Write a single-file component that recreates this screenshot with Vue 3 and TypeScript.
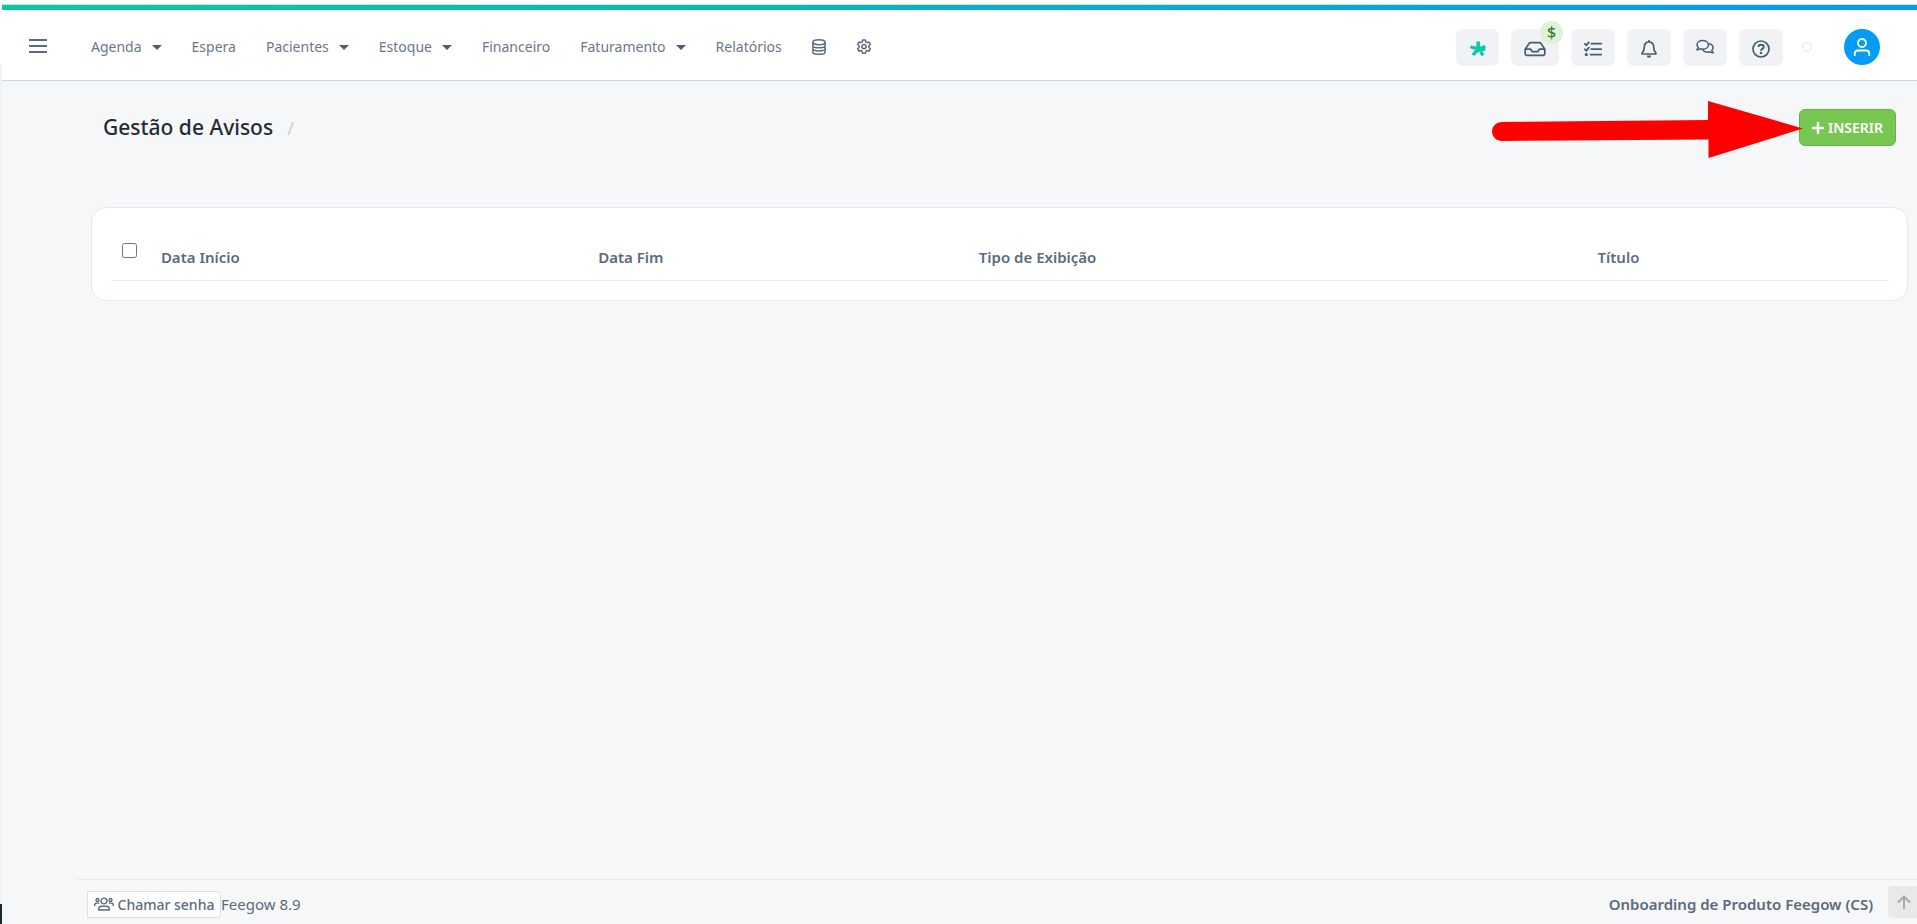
<script setup lang="ts">
import { ref } from 'vue'

interface NavItem {
  label: string
  menu: boolean
}

const navItems: NavItem[] = [
  { label: 'Agenda', menu: true },
  { label: 'Espera', menu: false },
  { label: 'Pacientes', menu: true },
  { label: 'Estoque', menu: true },
  { label: 'Financeiro', menu: false },
  { label: 'Faturamento', menu: true },
  { label: 'Relatórios', menu: false },
]

const allSelected = ref(false)
</script>

<template>
  <div class="shell">
    <div class="edge" aria-hidden="true"></div>
    <div class="page">
      <header class="topbar">
        <button class="menu-button" type="button" aria-label="Abrir menu">
          <svg width="18" height="18" viewBox="0 0 18 18" fill="none" stroke="currentColor" stroke-width="2">
            <path d="M0 2h18M0 8h18M0 14h18" />
          </svg>
        </button>
        <nav class="nav">
          <a v-for="item in navItems" :key="item.label" href="#" class="nav-link">
            {{ item.label }}
            <span v-if="item.menu" class="caret"></span>
          </a>
          <a href="#" class="nav-link" aria-label="Cadastros">
            <svg width="14" height="16" viewBox="0 0 14 16" fill="none" stroke="currentColor" stroke-width="1.5">
              <ellipse cx="7" cy="3.3" rx="6.1" ry="2.5" />
              <path d="M.9 3.3v9.6c0 1.3 2.7 2.4 6.1 2.4s6.1-1.1 6.1-2.4V3.3M.9 6.4c0 1.3 2.7 2.4 6.1 2.4s6.1-1.1 6.1-2.4M.9 9.6c0 1.3 2.7 2.4 6.1 2.4s6.1-1.1 6.1-2.4" />
            </svg>
          </a>
          <a href="#" class="nav-link" aria-label="Configurações">
            <svg width="16" height="16" viewBox="0 0 16 16" fill="none" stroke="currentColor" stroke-width="1.5" stroke-linejoin="round">
              <path d="M6.6 1h2.8l.4 1.900 1.300.8 1.900-.7 1.400 2.500-1.500 1.300v1.600l1.500 1.300-1.400 2.500-1.900-.7-1.300.8-.4 1.900H6.600l-.4-1.900-1.300-.8-1.900.7-1.400-2.500 1.500-1.300V6.800L1.600 5.500 3 3l1.900.7 1.300-.8z" />
              <circle cx="8" cy="7.6" r="2.2" />
            </svg>
          </a>
        </nav>
        <div class="tools">
          <button class="tool star" type="button" aria-label="Novidades">
            <svg width="16" height="16" viewBox="0 0 16 16" fill="none" stroke="currentColor">
              <path d="M8.200.5v6" stroke-width="3.600" />
              <path d="M.5 5.600c2.300 1.200 4.500 1.600 7.500 1.500 2.800 0 5-.5 7.200-1.700" stroke-width="3.200" />
              <path d="M3.200 14.100C4.600 10.500 8.800 8.200 15.300 8" stroke-width="3.600" />
              <path d="m10.800 10.600 2 3.900" stroke-width="3.200" />
            </svg>
          </button>
          <button class="tool wide" type="button" aria-label="Caixa">
            <svg width="22" height="16" viewBox="0 0 22 16" fill="none" stroke="currentColor" stroke-width="1.7" stroke-linejoin="round">
              <path d="M1.2 8.2 5 2.6C5.4 1.9 6 1.6 6.8 1.6h8.4c.8 0 1.4.3 1.8 1l3.8 5.6v4.6c0 .9-.6 1.5-1.5 1.5H2.7c-.9 0-1.5-.6-1.5-1.5zM1.5 8.2h5.2l1.5 2.5h5.6l1.5-2.5h5.2" />
            </svg>
            <span class="badge">$</span>
          </button>
          <button class="tool" type="button" aria-label="Tarefas">
            <svg width="18" height="16" viewBox="0 0 18 16" fill="none" stroke="currentColor" stroke-width="1.8" stroke-linecap="round">
              <path d="M7.4 2.7h9.8M7.4 8.2h9.8M6.6 13.6h10.6M.9 2.9l1.4 1.3L4.9 1.3M.9 8.3l1.4 1.3 2.6-2.9" />
              <circle cx="2.3" cy="13.6" r="1.6" fill="currentColor" stroke="none" />
            </svg>
          </button>
          <button class="tool" type="button" aria-label="Notificações">
            <svg width="16" height="18" viewBox="0 0 16 18" fill="none" stroke="currentColor" stroke-width="1.7" stroke-linejoin="round">
              <path d="M8 0v2M8 2c-3 0-4.700 2.200-4.700 5 0 3.700-1 4.900-2.100 5.900-.4.500-.2 1.100.4 1.100h12.800c.6 0 .8-.6.4-1.100-1.100-1-2.100-2.200-2.100-5.900 0-2.800-1.700-5-4.700-5z" />
              <path d="M5.800 15.600h4.400a2.200 2.200 0 0 1-4.400 0z" fill="currentColor" stroke="none" />
            </svg>
          </button>
          <button class="tool chat" type="button" aria-label="Mensagens">
            <svg width="18" height="16" viewBox="0 0 18 16" fill="none" stroke="currentColor" stroke-width="1.500" stroke-linejoin="round">
              <path d="M6.700 1.600c3.300 0 5.700 1.900 5.700 4.300s-2.400 4.300-5.700 4.300c-.9 0-1.700-.1-2.400-.4-1 .7-2.100 1-3.500 1 .8-.8 1.300-1.600 1.500-2.400C1.500 7.700 1 6.800 1 5.900c0-2.400 2.400-4.300 5.700-4.300z" />
              <path d="M12.600 4.800c2.600.3 4.500 2 4.500 4.100 0 .9-.5 1.800-1.300 2.500.2.800.7 1.600 1.500 2.400-1.400 0-2.500-.3-3.500-1-.7.3-1.500.4-2.400.4-2 0-3.700-.8-4.700-2.100" />
            </svg>
          </button>
          <button class="tool" type="button" aria-label="Ajuda">
            <svg width="18" height="18" viewBox="0 0 18 18" fill="none" stroke="currentColor" stroke-width="1.700">
              <circle cx="9" cy="9" r="8" />
              <path d="M6.400 6.900C6.500 5.400 7.500 4.800 9 4.800c1.500 0 2.700.8 2.700 2.200C11.700 8.900 9 8.800 9 10.800" stroke-width="2" />
              <circle cx="9" cy="13" r="1.300" fill="currentColor" stroke="none" />
            </svg>
          </button>
          <span class="status" aria-hidden="true"></span>
          <button class="avatar" type="button" aria-label="Perfil">
            <svg width="18" height="20" viewBox="0 0 18 20" fill="none" stroke="currentColor" stroke-width="1.800">
              <circle cx="9" cy="6" r="4" />
              <path d="M1.700 19v-2.300c0-2 1.300-3.200 3.300-3.200h8c2 0 3.300 1.200 3.300 3.200V19" />
            </svg>
          </button>
        </div>
      </header>

      <main class="content">
        <div class="heading">
          <h1>Gestão de Avisos</h1>
          <span class="slash">/</span>
          <div class="insert">
            <button class="insert-button" type="button">
              <svg width="12" height="12" viewBox="0 0 12 12" fill="none" stroke="currentColor" stroke-width="2.400" stroke-linecap="round">
                <path d="M6 1v10M1 6h10" />
              </svg>
              INSERIR
            </button>
            <svg class="pointer" width="312" height="58" viewBox="0 0 312 58" aria-hidden="true">
              <path d="M10.500 21 217 19V0l95 27.500L217.500 57V38.500L10.500 40a9.500 9.500 0 0 1 0-19z" fill="#f00" />
            </svg>
          </div>
        </div>

        <section class="card">
          <table>
            <thead>
              <tr>
                <th class="check"><input v-model="allSelected" type="checkbox" aria-label="Selecionar todos" /></th>
                <th class="start">Data Início</th>
                <th class="end">Data Fim</th>
                <th class="kind">Tipo de Exibição</th>
                <th>Título</th>
              </tr>
            </thead>
          </table>
        </section>
      </main>

      <footer class="footer">
        <button class="call" type="button">
          <svg width="20" height="14" viewBox="0 0 20 14" fill="none" stroke="currentColor" stroke-width="1.400">
            <circle cx="10" cy="4" r="2.900" />
            <circle cx="3.500" cy="3" r="1.500" />
            <circle cx="16.500" cy="3" r="1.500" />
            <path d="M4.700 13v-1c0-1.700 1.100-2.800 2.800-2.800h5c1.700 0 2.800 1.100 2.800 2.800v1zM.7 9V8c0-1.200.8-1.900 1.900-1.900h2.600M19.300 9V8c0-1.200-.8-1.900-1.900-1.900h-2.600" />
          </svg>
          Chamar senha
        </button>
        <span>Feegow 8.9</span>
        <strong>Onboarding de Produto Feegow (CS)</strong>
        <button class="to-top" type="button" aria-label="Voltar ao topo">
          <svg width="14" height="14" viewBox="0 0 14 14" fill="none" stroke="currentColor" stroke-width="2">
            <path d="M7 14V1.500M1 7.500l6-6 6 6" />
          </svg>
        </button>
      </footer>
    </div>
  </div>
</template>

<style>
body {
  margin: 0;
}
</style>

<style scoped>
.shell {
  display: flex;
  min-height: 100vh;
  box-sizing: border-box;
  font-family: "Segoe UI", "Noto Sans", sans-serif;
  font-size: 15px;
  color: #5b6b7c;
}
.shell *,
.shell *::before {
  box-sizing: border-box;
}
button {
  font-family: inherit;
  color: inherit;
  padding: 0;
  border: 0;
  background: none;
}
svg {
  display: block;
  flex: none;
}
.edge {
  width: 2px;
  background: linear-gradient(#fff 64px, #f0f1f2 64px, #f0f1f2 calc(100% - 20px), #1b2b2b calc(100% - 20px));
}
.page {
  flex: 1;
  min-width: 0;
  display: flex;
  flex-direction: column;
  background: #f5f7f9;
}
.topbar {
  position: relative;
  display: flex;
  align-items: center;
  height: 81px;
  padding: 14px 37px 0 27px;
  background: #fff;
  border-bottom: 1px solid #ced8e8;
}
.topbar::before {
  content: "";
  position: absolute;
  top: 4px;
  left: 0;
  right: 0;
  height: 6px;
  border-top: 1px solid #dcdcdc;
  background: linear-gradient(90deg, #00cca0, #00bbbb 40%, #00a3e8 80%, #009ff0) padding-box;
}
.menu-button {
  margin-right: 29px;
}
.nav {
  display: flex;
  align-items: center;
}
.nav-link {
  display: flex;
  align-items: center;
  gap: 10px;
  padding: 0 15px;
  font-size: 14px;
  line-height: 22px;
  color: #6a7888;
  text-decoration: none;
}
.nav-link svg {
  color: #5b6b7c;
}
.caret {
  border: 5px solid transparent;
  border-top-color: #4f5e6e;
  border-bottom-width: 0;
}
.tools {
  display: flex;
  align-items: center;
  gap: 12px;
  margin-left: auto;
  color: #455f6e;
}
.tool {
  position: relative;
  display: flex;
  align-items: center;
  justify-content: center;
  width: 44px;
  height: 37px;
  padding-top: 3px;
  border-radius: 7px;
  background: #f0f2f6;
}
.wide {
  width: 48px;
}
.chat {
  padding-top: 0;
}
.star {
  width: 43px;
  color: #0cc7a8;
}
.badge {
  position: absolute;
  top: -8px;
  right: -4px;
  width: 23px;
  height: 23px;
  border-radius: 50%;
  background: #dff2d8;
  color: #358022;
  font-size: 16px;
  font-weight: 500;
  line-height: 23px;
  text-align: center;
}
.status {
  width: 10px;
  height: 10px;
  margin: 0 20px 0 7px;
  border: 1px solid #e2e2e2;
  border-radius: 50%;
}
.avatar {
  display: flex;
  align-items: center;
  justify-content: center;
  width: 36px;
  height: 36px;
  border-radius: 50%;
  background: #009cf5;
  color: #fff;
}
.content {
  flex: 1;
  padding: 28px 9px 0 89px;
}
.heading {
  display: flex;
  align-items: center;
  height: 37px;
  margin: 0 12px 61px;
}
h1 {
  margin: 0;
  padding-bottom: 2px;
  font-size: 21px;
  line-height: 28px;
  font-weight: 500;
  color: #252b35;
}
.slash {
  margin-left: 14px;
  font-size: 18px;
  color: #ccc;
}
.insert {
  position: relative;
  margin-left: auto;
}
.insert-button {
  display: flex;
  align-items: center;
  justify-content: center;
  gap: 4px;
  width: 97px;
  height: 37px;
  border: 1px solid #68b346;
  border-radius: 6px;
  background: #79c753;
  color: #fff;
  font-size: 14px;
  font-weight: 600;
}
.pointer {
  position: absolute;
  top: -8px;
  right: 93px;
}
.card {
  padding: 17px 18px 19px 19px;
  border: 1px solid #e6e8ef;
  border-radius: 15px;
  background: #fff;
}
table {
  width: 100%;
  border-collapse: collapse;
}
th {
  height: 55px;
  padding: 0 9px 12px;
  border-bottom: 1px solid #eaebed;
  vertical-align: bottom;
  text-align: left;
  font-size: 15px;
  line-height: 22px;
  font-weight: 600;
}
.check {
  width: 2.3%;
  padding-bottom: 22px;
  line-height: 15px;
}
.check input {
  display: block;
  width: 15px;
  height: 15px;
  margin: 0 0 0 2px;
}
.start {
  width: 24.6%;
}
.end {
  width: 21.4%;
}
.kind {
  width: 34.8%;
}
.footer {
  display: flex;
  align-items: center;
  height: 45px;
  margin-left: 75px;
  padding: 4px 0 0 10px;
  border-top: 1px solid #e8eaec;
}
.call {
  display: flex;
  align-items: center;
  justify-content: center;
  gap: 4px;
  width: 134px;
  height: 27px;
  border: 1px solid #dcdee0;
  border-radius: 0 4px 4px 0;
  background: #fff;
  font-size: 14px;
  font-weight: 500;
}
.footer strong {
  margin-left: auto;
  font-weight: 600;
}
.to-top {
  display: flex;
  align-items: center;
  align-self: flex-start;
  width: 29px;
  height: 32px;
  margin: 2px 0 0 15px;
  padding-left: 9px;
  border-radius: 4px 0 0 4px;
  background: #e8e9ea;
  color: #aaa;
}
</style>
